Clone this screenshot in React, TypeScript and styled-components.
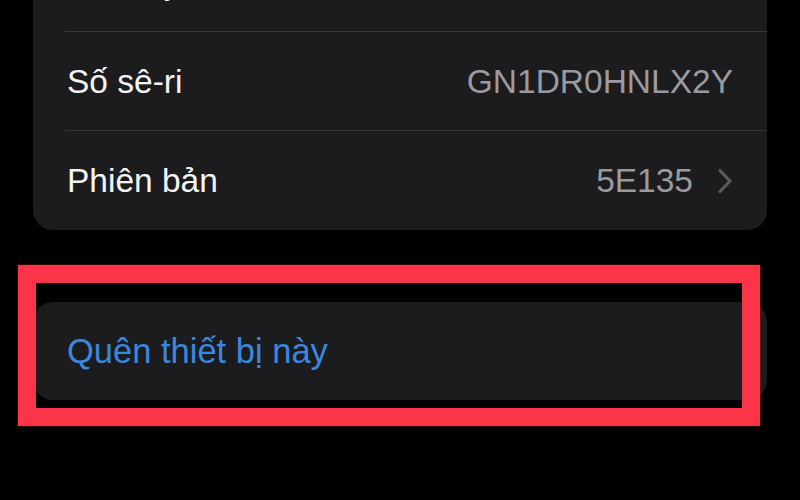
import React from 'react';
import styled, { createGlobalStyle } from 'styled-components';

const GlobalStyle = createGlobalStyle`
  html, body {
    margin: 0;
    padding: 0;
    background: #000;
  }
  body {
    font-family: "Liberation Sans", Arial, sans-serif;
    -webkit-font-smoothing: antialiased;
  }
`;

const Screen = styled.div`
  width: 800px;
  height: 500px;
  overflow: hidden;
  background: #000;
  padding: 0 33px;
  box-sizing: border-box;
`;

const Group = styled.div<{ $offset?: number }>`
  background: #1c1c1e;
  border-radius: 20px;
  margin-top: ${(p) => p.$offset ?? 0}px;
  overflow: hidden;
`;

const Row = styled.div<{ $divider?: boolean }>`
  position: relative;
  display: flex;
  align-items: center;
  justify-content: space-between;
  height: 99px;
  padding: 0 34px;
  box-sizing: border-box;

  ${(p) =>
    p.$divider &&
    `
    &::after {
      content: '';
      position: absolute;
      left: 32px;
      right: 0;
      bottom: 0;
      height: 1px;
      background: #38383a;
    }
  `}
`;

const Label = styled.span<{ $tint?: string; $size?: number }>`
  font-size: ${(p) => p.$size ?? 33.5}px;
  color: ${(p) => p.$tint ?? '#f4f4f6'};
`;

const Value = styled.span`
  display: flex;
  align-items: center;
  gap: 24px;
  font-size: 33.5px;
  color: #9a9a9f;
`;

const Chevron = styled.svg`
  width: 16px;
  height: 26px;
  display: block;
`;

const ActionWrap = styled.div`
  position: relative;
  margin-top: 72px;
`;

const ActionRow = styled(Row)`
  height: 98px;
`;

const Highlight = styled.div`
  position: absolute;
  left: -15px;
  top: -37px;
  right: 7px;
  bottom: -26px;
  border: 18px solid #fc3447;
  box-shadow: 0 0 2px rgba(252, 52, 71, 0.6);
  pointer-events: none;
`;

export default function App() {
  return (
    <>
      <GlobalStyle />
      <Screen>
        <Group $offset={-67}>
          <Row $divider>
            <Label>Số máy</Label>
          </Row>
          <Row $divider>
            <Label>Số sê-ri</Label>
            <Value>GN1DR0HNLX2Y</Value>
          </Row>
          <Row>
            <Label>Phiên bản</Label>
            <Value>
              5E135
              <Chevron viewBox="0 0 16 26">
                <path
                  d="M3 2.5 L13 13 L3 23.5"
                  fill="none"
                  stroke="#5b5b60"
                  strokeWidth="3.2"
                  strokeLinecap="round"
                  strokeLinejoin="round"
                />
              </Chevron>
            </Value>
          </Row>
        </Group>

        <ActionWrap>
          <Group>
            <ActionRow>
              <Label $tint="#3a88de" $size={34.5}>
                Quên thiết bị này
              </Label>
            </ActionRow>
          </Group>
          <Highlight />
        </ActionWrap>
      </Screen>
    </>
  );
}
